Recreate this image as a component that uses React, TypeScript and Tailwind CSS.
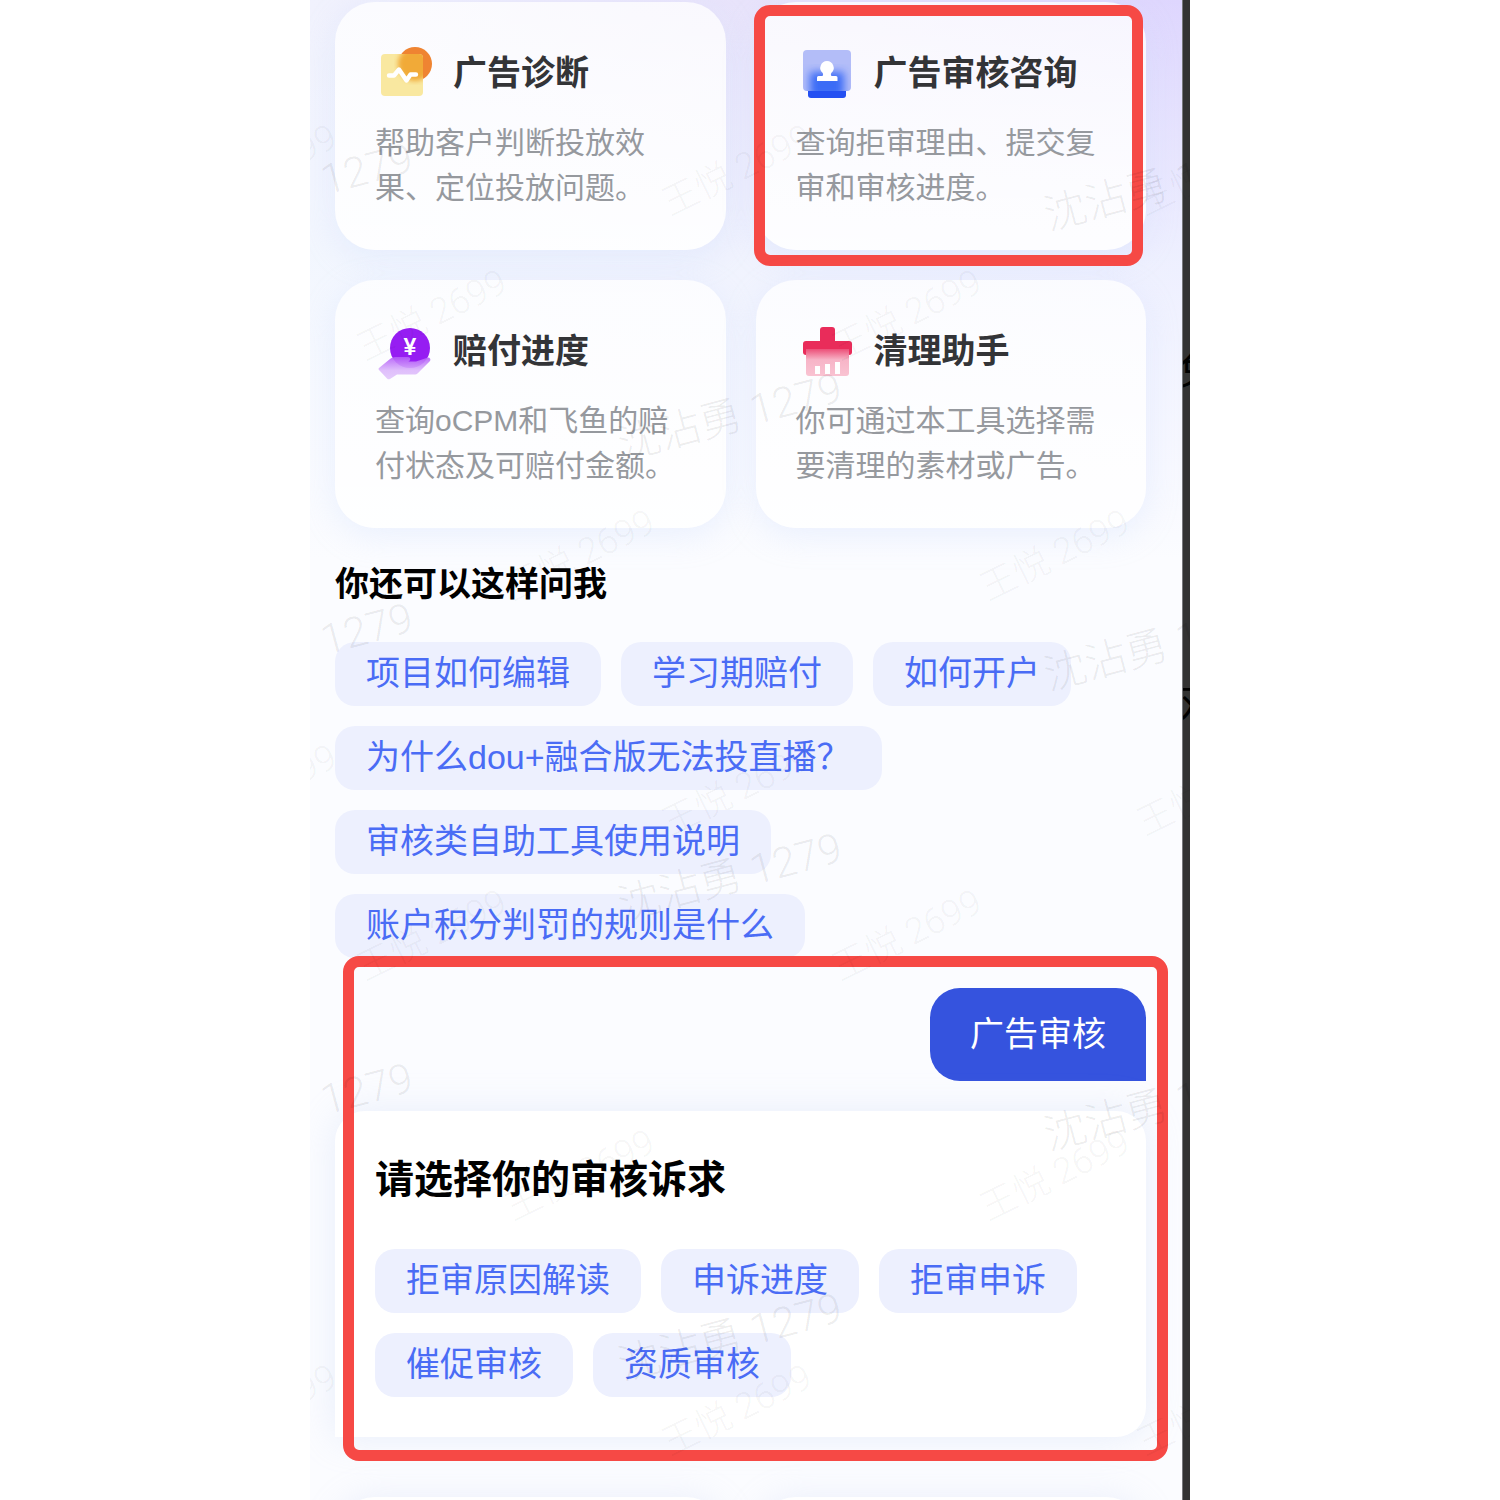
import type { ReactNode } from "react";

const DiagnoseIcon = () => (
  <svg viewBox="0 0 60 60" className="h-[60px] w-[60px] shrink-0" aria-hidden="true">
    <defs>
      <clipPath id="diagnose-clip">
        <rect x="6" y="11" width="42" height="42" rx="4" />
      </clipPath>
      <filter id="diagnose-blur">
        <feGaussianBlur stdDeviation="2.4" />
      </filter>
    </defs>
    <circle cx="40" cy="21" r="17" fill="#ef8432" />
    <rect x="6" y="11" width="42" height="42" rx="4" fill="#f9e8a0" />
    <g clipPath="url(#diagnose-clip)">
      <circle cx="40" cy="21" r="17" fill="#f1aa38" filter="url(#diagnose-blur)" />
    </g>
    <path
      d="M14 32.5h5l5-6 7.500 11 4-6H41"
      fill="none"
      stroke="#fff"
      strokeWidth="4.4"
      strokeLinecap="round"
      strokeLinejoin="round"
    />
  </svg>
);

const ReviewIcon = () => (
  <svg viewBox="0 0 60 60" className="h-[60px] w-[60px] shrink-0" aria-hidden="true">
    <defs>
      <clipPath id="review-clip">
        <rect x="7" y="7" width="48" height="41" rx="4" />
      </clipPath>
      <filter id="review-blur" x="-30%" y="-30%" width="160%" height="160%">
        <feGaussianBlur stdDeviation="4" />
      </filter>
    </defs>
    <rect x="12" y="36" width="38" height="19" rx="3" fill="#2450f2" />
    <rect x="7" y="7" width="48" height="41" rx="4" fill="#b3bdf8" />
    <g clipPath="url(#review-clip)">
      <rect x="14" y="29" width="34" height="26" fill="#3a6cf6" filter="url(#review-blur)" />
    </g>
    <path
      d="M31 18a6.800 6.800 0 0 1 4.500 11.800c-1 1.200-.6 2.400 0 3.200H40a1.500 1.500 0 0 1 1.500 1.500V38H21v-3.500a1.500 1.500 0 0 1 1.500-1.500h4c.6-.8 1-2 0-3.200A6.800 6.800 0 0 1 31 18z"
      fill="#fff"
    />
  </svg>
);

const PayoutIcon = () => (
  <svg viewBox="0 0 60 60" className="h-[60px] w-[60px] shrink-0" aria-hidden="true">
    <defs>
      <linearGradient id="hand-fade" x1="0" y1="0" x2="0" y2="1">
        <stop offset="0" stopColor="#b45cf8" />
        <stop offset="0.600" stopColor="#dcb8fb" />
        <stop offset="1" stopColor="#e2c6fb" />
      </linearGradient>
    </defs>
    <circle cx="35" cy="27" r="20" fill="#961df2" />
    <text x="35" y="34" textAnchor="middle" fontSize="23" fontWeight="700" fill="#fff">
      ¥
    </text>
    <path
      d="M4 47l11-9c2-1.500 4-2 7-2h11c3 0 3 4 0 4.500h8l12-4c2 0 3 2 2 3.500L43 52c-1 1-2 1.500-4 1.500H22L15 58c-1 .6-2 .4-3-.5L4 49c-.6-.7-.6-1.400 0-2z"
      fill="url(#hand-fade)"
      fillOpacity="0.900"
    />
  </svg>
);

const CleanIcon = () => (
  <svg viewBox="0 0 60 60" className="h-[60px] w-[60px] shrink-0" aria-hidden="true">
    <defs>
      <linearGradient id="brush-fade" x1="0" y1="0" x2="0" y2="1">
        <stop offset="0" stopColor="#ec4f78" />
        <stop offset="0.400" stopColor="#f7b4c7" />
        <stop offset="1" stopColor="#f9c3d2" />
      </linearGradient>
    </defs>
    <rect x="24" y="6" width="15" height="20" rx="3" fill="#e92c5a" />
    <rect x="7" y="20" width="49" height="14" rx="3" fill="#e92c5a" />
    <path d="M10 28h43v24a3 3 0 0 1-3 3H13a3 3 0 0 1-3-3z" fill="url(#brush-fade)" />
    <path d="M19 45h5v8h-5zM29 43h5v10h-5zM39 41h5v12h-5z" fill="#fff" />
  </svg>
);

const tools = [
  { icon: <DiagnoseIcon />, title: "广告诊断", description: "帮助客户判断投放效果、定位投放问题。" },
  { icon: <ReviewIcon />, title: "广告审核咨询", description: "查询拒审理由、提交复审和审核进度。", marked: true },
  { icon: <PayoutIcon />, title: "赔付进度", description: "查询oCPM和飞鱼的赔付状态及可赔付金额。" },
  { icon: <CleanIcon />, title: "清理助手", description: "你可通过本工具选择需要清理的素材或广告。" },
];

const questions = [
  "项目如何编辑",
  "学习期赔付",
  "如何开户",
  "为什么dou+融合版无法投直播？",
  "审核类自助工具使用说明",
  "账户积分判罚的规则是什么",
];

const appeals = ["拒审原因解读", "申诉进度", "拒审申诉", "催促审核", "资质审核"];

// centre points of the repeated watermark texts
const largeMarks = [-9, 420, 846].flatMap((x, col) =>
  [0, 460, 920].map((y) => ({ x, y: y + (col === 1 ? 417 : 187) }))
);
const smallMarks = [
  { x: -48, y: 170 },
  { x: 122, y: 315 },
  { x: 270, y: 555 },
].flatMap((m) =>
  [0, 475, 950]
    .filter((dx) => m.x + dx < 950)
    .flatMap((dx) => [0, 620, 1240].map((dy) => ({ x: m.x + dx, y: m.y + dy })))
    .filter((p) => p.y < 1500)
);

function Chip({ children }: { children: ReactNode }) {
  return (
    <button
      type="button"
      className="h-16 rounded-[20px] bg-[#edf0fe] px-[31px] pb-0.5 text-[34px] leading-none text-[#4a6cf5]"
    >
      {children}
    </button>
  );
}

function Watermarks() {
  return (
    <div
      className="pointer-events-none absolute inset-0 select-none overflow-hidden font-['Roboto','Noto_Sans_CJK_SC',sans-serif] font-light"
      aria-hidden="true"
    >
      {largeMarks.map((m) => (
        <span
          key={`l-${m.x}-${m.y}`}
          className="absolute -translate-x-1/2 -translate-y-1/2 -rotate-[15deg] whitespace-nowrap text-[42px] leading-none text-black/8"
          style={{ left: m.x, top: m.y }}
        >
          沈沾勇 1279
        </span>
      ))}
      {smallMarks.map((m) => (
        <span
          key={`s-${m.x}-${m.y}`}
          className="absolute -translate-x-1/2 -translate-y-1/2 -rotate-[26deg] whitespace-nowrap text-[36px] leading-none text-black/5"
          style={{ left: m.x, top: m.y }}
        >
          王悦 2699
        </span>
      ))}
    </div>
  );
}

export default function App() {
  return (
    <div className="h-screen overflow-hidden bg-white font-['Liberation_Sans','Noto_Sans_CJK_SC',sans-serif]">
      <div className="relative mx-auto flex h-full max-w-[880px]">
        <main className="min-w-0 flex-1 overflow-hidden bg-[#fbfcff] bg-[linear-gradient(to_bottom,transparent,rgba(243,248,255,0.75)_260px,#fbfcff_560px),linear-gradient(to_right,#f1f2fd,#e8e3fb_50%,#ded6fe)] pt-[2px] pr-9 pl-[25px]">
          <section className="grid grid-cols-2 gap-[30px]">
            {tools.map((tool) => (
              <article
                key={tool.title}
                className="relative rounded-[40px] bg-linear-to-b from-white/75 to-white/90 px-10 pt-10 pb-10 shadow-[0_8px_32px_rgba(190,210,250,0.25)]"
              >
                <div className="flex h-[62px] items-center gap-[18px]">
                  {tool.icon}
                  <h3 className="whitespace-nowrap text-[34px] font-semibold text-[#333437]">{tool.title}</h3>
                </div>
                <p className="mt-4 text-[30px] leading-[45px] text-[#96999e]">{tool.description}</p>
                {tool.marked && (
                  <div className="pointer-events-none absolute top-[3px] right-[3px] -bottom-4 -left-0.5 rounded-2xl border-[11px] border-[#f64945]" />
                )}
              </article>
            ))}
          </section>

          <h2 className="mt-8 flex h-12 items-center text-[34px] font-semibold text-black">你还可以这样问我</h2>
          <div className="mt-[34px] flex flex-wrap gap-5">
            {questions.map((q) => (
              <Chip key={q}>{q}</Chip>
            ))}
          </div>

          <section className="relative mt-[30px] flex flex-col gap-[30px]">
            <div className="flex h-[93px] items-center self-end rounded-[30px] rounded-br-none bg-[#3553de] px-10 text-[34px] text-white">
              广告审核
            </div>
            <div className="rounded-[30px] rounded-bl-none bg-white p-10 shadow-[0_0_36px_rgba(190,205,240,0.3)]">
              <h2 className="flex h-[58px] items-center text-[39px] font-semibold text-black">请选择你的审核诉求</h2>
              <div className="mt-10 flex flex-wrap gap-5">
                {appeals.map((a) => (
                  <Chip key={a}>{a}</Chip>
                ))}
              </div>
            </div>
            <div className="pointer-events-none absolute -top-8 -right-[22px] -bottom-6 left-2 rounded-2xl border-[11px] border-[#f64945]" />
          </section>

          <div className="mt-[60px] grid grid-cols-2 gap-[30px]">
            <div className="h-60 rounded-[40px] bg-white shadow-[0_0_32px_rgba(190,205,240,0.25)]" />
            <div className="h-60 rounded-[40px] bg-white shadow-[0_0_32px_rgba(190,205,240,0.25)]" />
          </div>
        </main>

        <aside className="w-2 shrink-0 overflow-hidden border-l border-[#77787c] bg-[#333] pt-[346px] text-[40px] leading-[48px] text-black">
          <p className="-ml-1 w-10">免</p>
          <p className="-ml-1 mt-[284px] w-10">对</p>
        </aside>

        <Watermarks />
      </div>
    </div>
  );
}
